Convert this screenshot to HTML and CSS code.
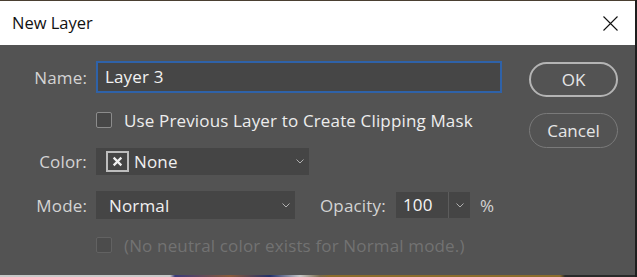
FILE: index.html
```html
<!DOCTYPE html>
<html lang="en">
<head>
    <meta charset="UTF-8">
    <title>New Layer</title>
    <link rel="stylesheet" href="styles.css">
</head>
<body>
    <div class="dialog">
        <div class="title-bar">
            <span class="title">New Layer</span>
            <svg class="close" viewBox="0 0 15 15">
                <path d="M0.5 0.5 L14.5 14.5 M14.5 0.5 L0.5 14.5"></path>
            </svg>
        </div>

        <div class="content">
            <div class="fields">
                <div class="row row-name">
                    <label class="label">Name:</label>
                    <div class="text-input">Layer 3</div>
                </div>

                <div class="row row-clip">
                    <span class="checkbox"></span>
                    <span class="check-label">Use Previous Layer to Create Clipping Mask</span>
                </div>

                <div class="row row-color">
                    <label class="label">Color:</label>
                    <div class="select select-color">
                        <span class="swatch-none">
                            <svg viewBox="0 0 10 10"><path d="M1.5 1.5 L8.5 8.5 M8.5 1.5 L1.5 8.5"></path></svg>
                        </span>
                        <span class="value">None</span>
                        <svg class="chevron" viewBox="0 0 8 5"><path d="M0.5 0.5 L4 4 L7.5 0.5"></path></svg>
                    </div>
                </div>

                <div class="row row-mode">
                    <label class="label">Mode:</label>
                    <div class="select select-mode">
                        <span class="value">Normal</span>
                        <svg class="chevron" viewBox="0 0 8 5"><path d="M0.5 0.5 L4 4 L7.5 0.5"></path></svg>
                    </div>
                    <label class="opacity-label">Opacity:</label>
                    <div class="opacity">
                        <span class="opacity-value">100</span>
                        <span class="opacity-arrow">
                            <svg class="chevron" viewBox="0 0 8 5"><path d="M0.5 0.5 L4 4 L7.5 0.5"></path></svg>
                        </span>
                    </div>
                    <span class="percent">%</span>
                </div>

                <div class="row row-neutral">
                    <span class="checkbox disabled"></span>
                    <span class="check-label disabled">(No neutral color exists for Normal mode.)</span>
                </div>
            </div>

            <div class="buttons">
                <button class="btn btn-ok">OK</button>
                <button class="btn btn-cancel">Cancel</button>
            </div>
        </div>
    </div>
    <div class="taskbar-strip"></div>
</body>
</html>
```

FILE: styles.css
```css
body {
    margin: 0;
    width: 637px;
    height: 277px;
    overflow: hidden;
    background-color: #1e1e1e;
    font-family: "Open Sans", "Noto Sans", sans-serif;
}

.dialog {
    width: 635px;
    height: 275px;
    background-color: #535353;
    display: flex;
    flex-direction: column;
}

.title-bar {
    height: 44px;
    border-top: 1px solid #4a3f31;
    background-color: #fff;
    display: flex;
    align-items: center;
    justify-content: space-between;
    padding: 0 17px 0 12px;
}

.title {
    font-size: 16.5px;
    color: #111;
    margin-top: -1px;
}

.close {
    width: 15px;
    height: 15px;
    fill: none;
    stroke: #111;
    stroke-width: 1.1;
}

.content {
    display: flex;
    flex: 1;
}

.fields {
    width: 520px;
    display: flex;
    flex-direction: column;
    font-size: 17px;
    letter-spacing: 0.15px;
}

.row {
    display: flex;
    align-items: center;
}

.label {
    width: 87px;
    text-align: right;
    margin-right: 9px;
    color: #d4d4d4;
}

.row-name {
    margin-top: 16px;
    height: 32px;
}

.text-input {
    width: 395px;
    height: 28px;
    border: 2px solid #2f62a8;
    background-color: #464646;
    color: #f2f2f2;
    line-height: 28px;
    padding-left: 7px;
    box-sizing: content-box;
}

.row-clip {
    margin-top: 17px;
    height: 20px;
    padding-left: 96px;
}

.checkbox {
    width: 14px;
    height: 14px;
    border: 1px solid #8c8c8c;
    border-radius: 2px;
    background-color: #474747;
    margin-right: 12px;
}

.checkbox.disabled {
    border-color: #626262;
    background-color: #4c4c4c;
}

.check-label {
    color: #ededed;
}

.check-label.disabled {
    color: #727272;
}

.row-color {
    margin-top: 18px;
    height: 27px;
}

.select {
    height: 27px;
    background-color: #454545;
    display: flex;
    align-items: center;
    color: #f0f0f0;
}

.select-color {
    width: 213px;
    padding-left: 10px;
    box-sizing: border-box;
}

.swatch-none {
    width: 19px;
    height: 17px;
    border: 2px solid #bdbdbd;
    display: flex;
    align-items: center;
    justify-content: center;
    margin-right: 5px;
}

.swatch-none svg {
    width: 11px;
    height: 11px;
    fill: none;
    stroke: #f0f0f0;
    stroke-width: 2;
}

.chevron {
    width: 8px;
    height: 5px;
    fill: none;
    stroke: #b0b0b0;
    stroke-width: 1;
}

.select .chevron {
    margin-left: auto;
    margin-right: 5px;
}

.row-mode {
    margin-top: 16px;
    height: 28px;
}

.select-mode {
    width: 199px;
    height: 28px;
    padding-left: 13px;
    box-sizing: border-box;
}

.opacity-label {
    color: #d4d4d4;
    margin-left: 25px;
    width: 76px;
}

.opacity {
    width: 74px;
    height: 26px;
    background-color: #454545;
    display: flex;
}

.opacity-value {
    width: 53px;
    padding-left: 7px;
    box-sizing: border-box;
    color: #f6f6f6;
    line-height: 26px;
    border-right: 1px solid #5c5c5c;
}

.opacity-arrow {
    flex: 1;
    display: flex;
    align-items: center;
    justify-content: center;
}

.percent {
    color: #d4d4d4;
    margin-left: 10px;
}

.row-neutral {
    margin-top: 16px;
    height: 20px;
    padding-left: 96px;
}

.buttons {
    display: flex;
    flex-direction: column;
    gap: 16px;
    margin-left: 9px;
    margin-top: 17px;
}

.btn {
    width: 89px;
    height: 35px;
    border-radius: 18px;
    background-color: transparent;
    font-family: inherit;
    font-size: 17px;
    color: #e6e6e6;
    padding: 0;
}

.btn-ok {
    border: 2px solid #b4b4b4;
}

.btn-cancel {
    border: 1px solid #7a7a7a;
}

.taskbar-strip {
    height: 2px;
    width: 635px;
    background: linear-gradient(to right, #c9c9c9 0, #c9c9c9 170px, #3a3a7a 175px, #8a5a3a 230px, #22306a 270px, #c8c8c8 300px, #7a6a4a 320px, #8c6c2c 330px, #8c6c2c 560px, #2a2a2a 565px);
}
```
